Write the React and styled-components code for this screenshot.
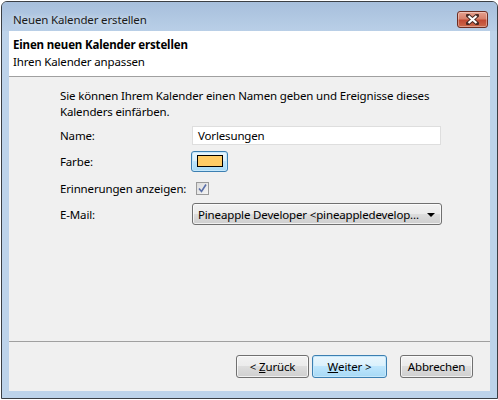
import React from 'react';
import styled, { createGlobalStyle } from 'styled-components';

const GlobalStyle = createGlobalStyle`
  html, body {
    margin: 0;
    padding: 0;
    background: #ffffff;
  }
  body {
    font-family: 'Noto Sans', 'Open Sans', sans-serif;
    font-size: 11.5px;
    letter-spacing: -0.15px;
    color: #000;
  }
`;

const Window = styled.div`
  box-sizing: border-box;
  width: 497px;
  height: 398px;
  margin: 1px 0 0 1px;
  border: 1px solid #3b3f44;
  border-radius: 6px 6px 0 0;
  background: #bdd3ea;
  display: flex;
  flex-direction: column;
  overflow: hidden;
`;

const TitleBar = styled.div`
  height: 29px;
  flex: none;
  box-sizing: border-box;
  padding: 9px 9px 0 11px;
  display: flex;
  align-items: flex-start;
  justify-content: space-between;
  background: linear-gradient(#a7bfdc, #b9cfe7);
`;

const TitleText = styled.span`
  line-height: 17px;
  color: #1a1a1a;
  text-shadow: 0 0 6px rgba(255, 255, 255, 0.8);
`;

const CloseButton = styled.div`
  width: 31px;
  height: 17px;
  box-sizing: border-box;
  border: 1px solid #6d2d22;
  border-radius: 3px;
  background: linear-gradient(#e6a08f 0%, #d7806b 45%, #c24a33 55%, #cc6a4c 100%);
  box-shadow: inset 0 0 0 1px rgba(255, 255, 255, 0.35);
  display: flex;
  align-items: center;
  justify-content: center;
`;

const Frame = styled.div`
  flex: 1;
  padding: 0 7px 7px 7px;
  display: flex;
`;

const Content = styled.div`
  flex: 1;
  background: #f0f0f0;
  display: flex;
  flex-direction: column;
`;

const Header = styled.div`
  background: #fff;
  height: 46px;
  box-sizing: border-box;
  padding: 5px 4px 0 4px;
  border-bottom: 1px solid #a0a0a0;
`;

const HeaderTitle = styled.div`
  font-weight: bold;
  line-height: 17px;
`;

const HeaderSub = styled.div`
  line-height: 18px;
`;

const Body = styled.div`
  flex: 1;
  padding: 11px 20px 0 51px;
`;

const Intro = styled.p`
  margin: 0 0 2px 0;
  line-height: 16px;
  width: 380px;
`;

const FormGrid = styled.div`
  display: grid;
  grid-template-columns: 131px 250px;
  grid-template-rows: 26px 26px 27px 26px;
  align-items: center;
  margin-top: 2px;
`;

const Label = styled.label`
  line-height: 16px;
  padding-top: 2px;
  white-space: nowrap;
`;

const TextInput = styled.div`
  box-sizing: border-box;
  height: 19px;
  width: 249px;
  margin-left: 1px;
  background: #fff;
  border: 1px solid #dedede;
  padding: 1px 0 0 5px;
  line-height: 16px;
`;

const ColorButton = styled.div`
  box-sizing: border-box;
  width: 37px;
  height: 21px;
  border: 1px solid #3c7fb1;
  border-radius: 3px;
  background: linear-gradient(#eaf6fd 0%, #d9f0fc 50%, #bee6fd 50%, #a7d9f5 100%);
  box-shadow: inset 0 0 0 1px #c6e8fb;
  display: flex;
  align-items: center;
  justify-content: center;
`;

const Swatch = styled.div`
  width: 24px;
  height: 10px;
  border: 1px solid #000;
  background: ${(p) => p.color};
`;

const CheckBox = styled.div`
  box-sizing: border-box;
  width: 13px;
  height: 13px;
  margin: 2px 0 0 5px;
  border: 1px solid #9a9a9a;
  background: linear-gradient(135deg, #dcdcdc, #f4f4f4);
  display: flex;
  align-items: center;
  justify-content: center;
`;

const Select = styled.div`
  box-sizing: border-box;
  width: 250px;
  height: 22px;
  margin-left: 1px;
  border: 1px solid #707070;
  border-radius: 3px;
  background: linear-gradient(#f2f2f2 0%, #ebebeb 50%, #dddddd 50%, #cfcfcf 100%);
  box-shadow: inset 0 0 0 1px rgba(255, 255, 255, 0.7);
  display: flex;
  align-items: center;
  justify-content: space-between;
  padding: 1px 6px 0 5px;
  white-space: nowrap;
`;

const Arrow = styled.span`
  width: 0;
  height: 0;
  border-left: 4px solid transparent;
  border-right: 4px solid transparent;
  border-top: 4px solid #000;
`;

const Footer = styled.div`
  border-top: 1px solid #a0a0a0;
  height: 50px;
  box-sizing: border-box;
  padding: 13px 17px 0 0;
  display: flex;
  justify-content: flex-end;
  align-items: flex-start;
`;

const Button = styled.div`
  box-sizing: border-box;
  width: ${(p) => p.w}px;
  height: 23px;
  margin-left: ${(p) => p.gap || 0}px;
  border: 1px solid ${(p) => (p.primary ? '#3c7fb1' : '#707070')};
  border-radius: 3px;
  background: ${(p) =>
    p.primary
      ? 'linear-gradient(#eaf6fd 0%, #d9f0fc 50%, #bee6fd 50%, #a7d9f5 100%)'
      : 'linear-gradient(#f2f2f2 0%, #ebebeb 50%, #dddddd 50%, #cfcfcf 100%)'};
  box-shadow: inset 0 0 0 1px ${(p) => (p.primary ? '#c6e8fb' : 'rgba(255,255,255,0.7)')};
  display: flex;
  align-items: center;
  justify-content: center;
  line-height: 16px;
`;

const Key = styled.span`
  text-decoration: underline;
`;

export default function App() {
  return (
    <>
      <GlobalStyle />
      <Window>
        <TitleBar>
          <TitleText>Neuen Kalender erstellen</TitleText>
          <CloseButton>
            <svg width="13" height="11" viewBox="0 0 13 11">
              <path d="M2 1.5 L11 9.5 M11 1.5 L2 9.5" stroke="#4a2a24" strokeWidth="4" strokeLinecap="square" />
              <path d="M2.5 2 L10.5 9 M10.5 2 L2.5 9" stroke="#ffffff" strokeWidth="2.2" />
            </svg>
          </CloseButton>
        </TitleBar>
        <Frame>
          <Content>
            <Header>
              <HeaderTitle>Einen neuen Kalender erstellen</HeaderTitle>
              <HeaderSub>Ihren Kalender anpassen</HeaderSub>
            </Header>
            <Body>
              <Intro>
                Sie können Ihrem Kalender einen Namen geben und Ereignisse dieses Kalenders einfärben.
              </Intro>
              <FormGrid>
                <Label>Name:</Label>
                <TextInput>Vorlesungen</TextInput>
                <Label>Farbe:</Label>
                <ColorButton>
                  <Swatch color="#ffcc66" />
                </ColorButton>
                <Label>Erinnerungen anzeigen:</Label>
                <CheckBox>
                  <svg width="9" height="9" viewBox="0 0 9 9">
                    <path d="M1 4.5 L3.5 7.5 L8 0.5" fill="none" stroke="#5a6fa8" strokeWidth="1.6" />
                  </svg>
                </CheckBox>
                <Label>E-Mail:</Label>
                <Select>
                  <span>Pineapple Developer &lt;pineappledevelop...</span>
                  <Arrow />
                </Select>
              </FormGrid>
            </Body>
            <Footer>
              <Button w={73}>
                &lt;&nbsp;<Key>Z</Key>urück
              </Button>
              <Button w={75} gap={3} primary>
                <Key>W</Key>eiter &gt;
              </Button>
              <Button w={73} gap={13}>
                Abbrechen
              </Button>
            </Footer>
          </Content>
        </Frame>
      </Window>
    </>
  );
}
